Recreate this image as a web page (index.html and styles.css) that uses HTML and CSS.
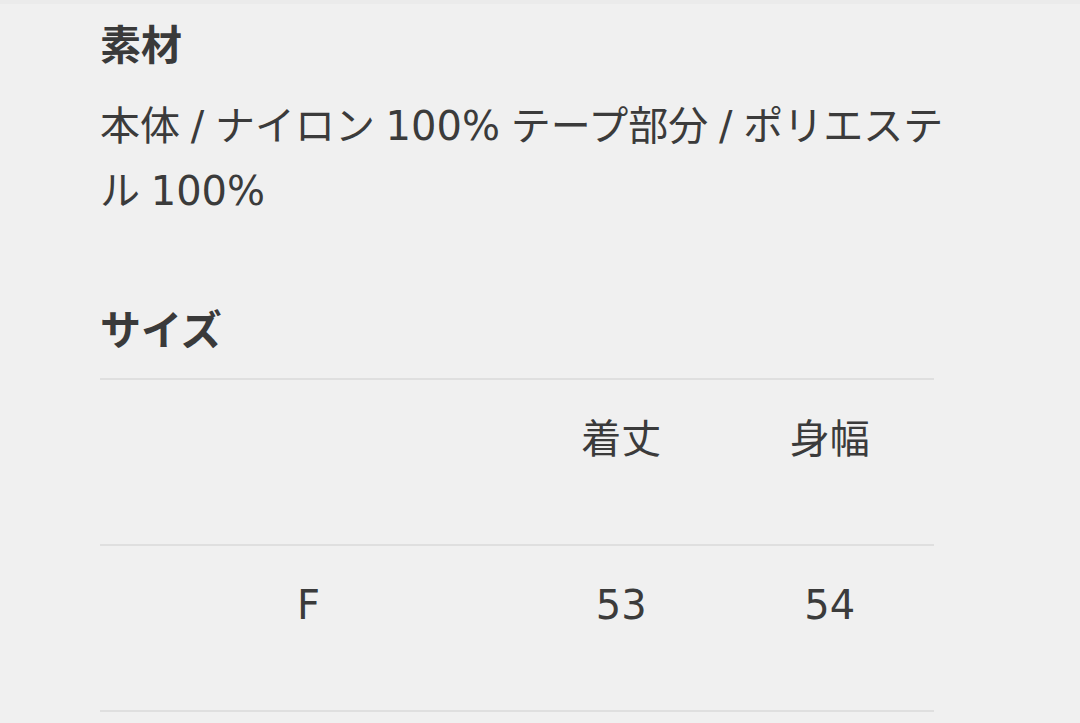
FILE: index.html
```html
<!DOCTYPE html>
<html lang="ja">
<head>
<meta charset="utf-8">
<title>素材・サイズ</title>
<link rel="stylesheet" href="styles.css">
</head>
<body>
<main class="page">
  <section class="block">
    <h2 class="block-title">素材</h2>
    <p class="block-text">本体 / ナイロン 100% テープ部分 / ポリエステル 100%</p>
  </section>
  <section class="block block-size">
    <h2 class="block-title">サイズ</h2>
    <table class="size-table">
      <thead>
        <tr>
          <th class="col-label"></th>
          <th class="col-val">着丈</th>
          <th class="col-val">身幅</th>
        </tr>
      </thead>
      <tbody>
        <tr>
          <td class="col-label">F</td>
          <td class="col-val">53</td>
          <td class="col-val">54</td>
        </tr>
      </tbody>
    </table>
  </section>
</main>
</body>
</html>
```

FILE: styles.css
```css
html, body {
  margin: 0;
  padding: 0;
}
body {
  background: #f0f0f0;
  color: #3b3b3b;
  font-family: "DejaVu Sans", "Noto Sans CJK JP", sans-serif;
  font-size: 40px;
  border-top: 4px solid #ebebeb;
}
.page {
  padding: 5px 100px 0 100px;
  width: 880px;
}
.block-title {
  margin: 0;
  font-family: "Noto Sans CJK JP", sans-serif;
  font-weight: 700;
  font-size: 41px;
  line-height: 66px;
  color: #3a3a3a;
}
.block-text {
  margin: 19px 0 0 0;
  width: 852px;
  line-height: 65px;
  font-weight: 400;
  word-spacing: -2px;
}
.block-size {
  margin-top: 70px;
}
.size-table {
  margin-top: 18px;
  width: 834px;
  border-collapse: collapse;
  table-layout: fixed;
}
.size-table tr {
  border-top: 2px solid #dfdfdf;
  border-bottom: 2px solid #dfdfdf;
}
.size-table th,
.size-table td {
  font-weight: 400;
  text-align: center;
  vertical-align: top;
  padding: 26px 0 72px 0;
  line-height: 66px;
  height: 66px;
}
.col-label {
  width: 50%;
}
.col-val {
  width: 25%;
}
```
